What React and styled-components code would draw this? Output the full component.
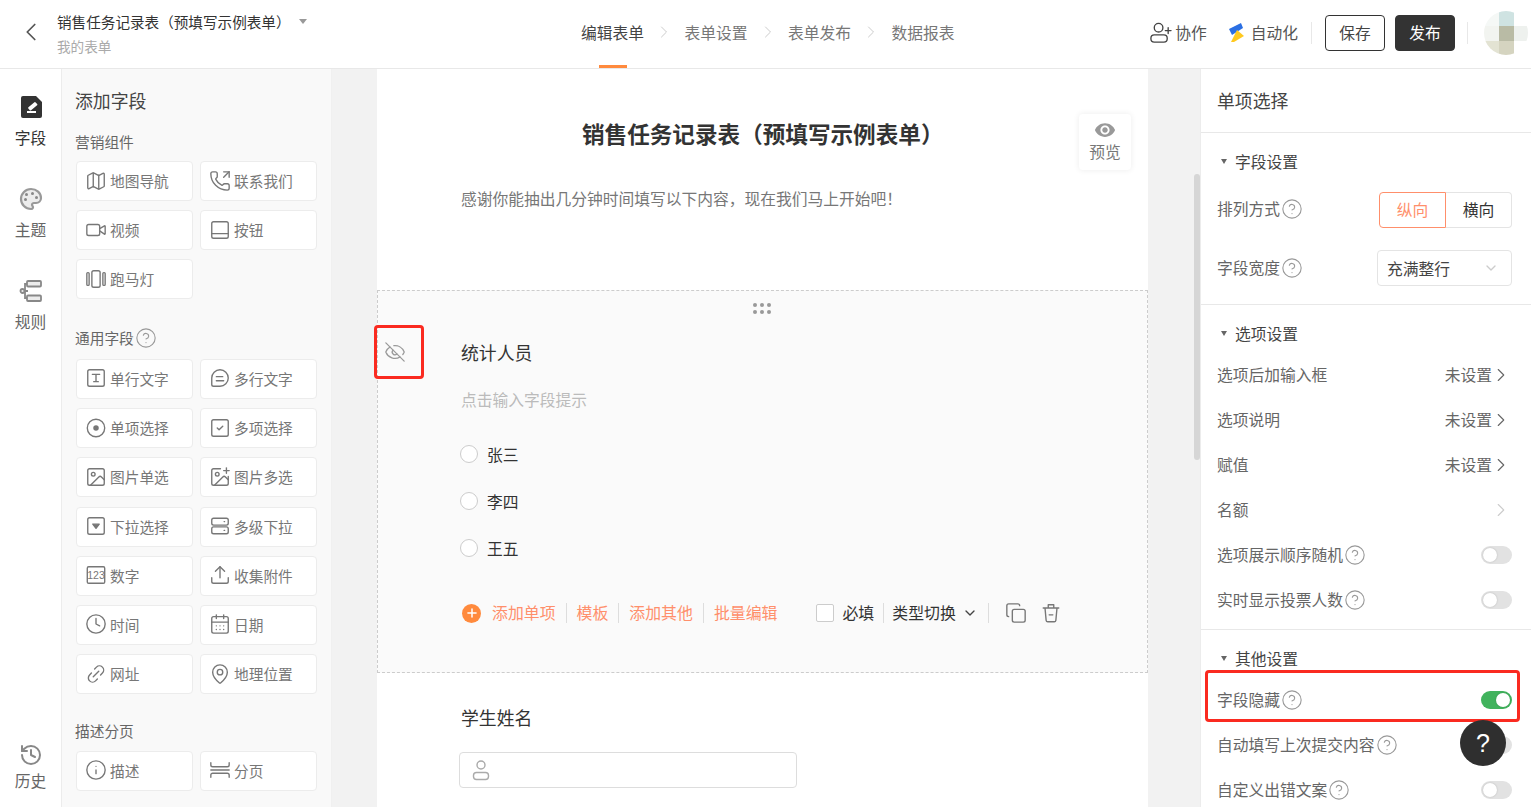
import React from "react";
import styled, { createGlobalStyle } from "styled-components";
import {
  ChevronLeft, ChevronRight, ChevronDown, EyeOff, Plus, Copy,
  Map, PhoneOutgoing, Video, SquareCheck, Image, ImagePlus, Upload, Clock, CalendarDays,
  MapPin, Info, History, HelpCircle,
} from "lucide-react";

const GlobalStyle = createGlobalStyle`
  html, body { margin: 0; padding: 0; background: #fff; }
  body { font-family: "Noto Sans CJK SC", "Noto Sans", "Liberation Sans", sans-serif; color: #333; }
  * { box-sizing: border-box; }
`;

const Page = styled.div`
  width: 1531px;
  height: 807px;
  overflow: hidden;
  position: relative;
  display: flex;
  flex-direction: column;
`;

/* top bar */
const Header = styled.header`
  height: 69px;
  flex: none;
  display: flex;
  align-items: center;
  border-bottom: 1px solid #e8e8e8;
  background: #fff;
`;
const BackZone = styled.div`
  width: 57px;
  display: flex;
  justify-content: center;
  padding: 0 0 4px 4px;
  color: #555;
`;
const TitleBlock = styled.div`
  width: 524px;
  display: flex;
  flex-direction: column;
  gap: 6px;
  margin-top: -1px;
`;
const TitleLine = styled.div`
  display: flex;
  align-items: flex-start;
  font-size: 14.6px;
  line-height: 18px;
  color: #333;
`;
const Caret = styled.span`
  width: 0;
  height: 0;
  margin: 6px 0 0 8px;
  border-left: 4px solid transparent;
  border-right: 4px solid transparent;
  border-top: 5px solid #999;
`;
const SubTitle = styled.div`
  font-size: 13.6px;
  line-height: 18px;
  color: #aaa;
`;
const Steps = styled.nav`
  display: flex;
  align-items: center;
  height: 100%;
`;
const Step = styled.span`
  position: relative;
  height: 100%;
  padding-bottom: 4px;
  display: flex;
  align-items: center;
  font-size: 15.75px;
  color: ${(p) => (p.$active ? "#444" : "#777")};
  ${(p) =>
    p.$active &&
    `&::after {
      content: "";
      position: absolute;
      left: 18px;
      bottom: 0;
      width: 28px;
      height: 3px;
      background: #ff8a3d;
    }`}
`;
const StepArrow = styled.span`
  width: 40.5px;
  height: 100%;
  padding-bottom: 4px;
  display: flex;
  align-items: center;
  justify-content: center;
  color: #ccc;
`;
const Actions = styled.div`
  margin-left: auto;
  margin-bottom: 3px;
  display: flex;
  align-items: center;
`;
const ActionLink = styled.span`
  display: flex;
  align-items: center;
  gap: ${(p) => p.$gap || 3}px;
  font-size: 15.75px;
  color: #555;
  margin-right: ${(p) => p.$mr || 0}px;
`;
const HeadDivider = styled.span`
  width: 1px;
  height: 22px;
  background: #e8e8e8;
  margin: ${(p) => p.$m};
`;
const HeadButton = styled.button`
  width: 60px;
  height: 36px;
  border-radius: 4px;
  font: inherit;
  font-size: 15.75px;
  padding: 0;
  border: 1px solid #333;
  background: ${(p) => (p.$dark ? "#333" : "#fff")};
  color: ${(p) => (p.$dark ? "#fff" : "#444")};
  margin-right: ${(p) => p.$mr || 0}px;
`;
const Avatar = styled.div`
  width: 44px;
  height: 44px;
  margin-right: 3px;
  border-radius: 50%;
  overflow: hidden;
  display: grid;
  grid-template-columns: 15px 15px 14px;
  grid-template-rows: 15px 15px 14px;
`;
const AvatarCell = styled.span`
  background: ${(p) => p.$c};
`;

const Body = styled.div`
  flex: 1;
  display: flex;
  min-height: 0;
`;

/* left rail */
const Rail = styled.aside`
  width: 62px;
  flex: none;
  border-right: 1px solid #ececec;
  padding: 26px 0 15px;
  display: flex;
  flex-direction: column;
  align-items: center;
  gap: 38px;
`;
const RailItem = styled.div`
  display: flex;
  flex-direction: column;
  align-items: center;
  gap: ${(p) => (p.$bottom ? 3 : 8)}px;
  font-size: 15.75px;
  line-height: 22px;
  color: ${(p) => (p.$active ? "#333" : "#666")};
  margin-top: ${(p) => (p.$bottom ? "auto" : 0)};
  svg { display: block; }
`;

/* field palette */
const FieldPalette = styled.aside`
  width: 270px;
  flex: none;
  background: #f9f9f9;
  border-right: 1px solid #f0f0f0;
  padding: 19px 0 0 14px;
`;
const PaletteTitle = styled.h2`
  margin: 0 0 19px -1px;
  font-size: 17.85px;
  font-weight: 400;
  line-height: 24px;
  color: #444;
`;
const GroupLabel = styled.div`
  display: flex;
  align-items: center;
  gap: 1px;
  margin: 0 0 ${(p) => p.$mb || 8}px -1px;
  font-size: 14.7px;
  line-height: 22px;
  color: #666;
`;
const FieldGrid = styled.div`
  display: grid;
  grid-template-columns: 117px 117px;
  column-gap: 7px;
  row-gap: 9.2px;
  margin-bottom: ${(p) => p.$mb || 0}px;
`;
const FieldButton = styled.div`
  height: 40px;
  border: 1px solid #ececec;
  border-radius: 4px;
  background: #fff;
  display: flex;
  align-items: center;
  gap: 3px;
  padding: 0 0 1px 8px;
  font-size: 14.7px;
  color: #777;
  svg { flex: none; }
`;

/* canvas */
const Canvas = styled.main`
  flex: 1;
  min-width: 0;
  position: relative;
  background: #f2f2f2;
  padding: 0 52px 0 45px;
  overflow: hidden;
`;
const ScrollThumb = styled.div`
  position: absolute;
  right: 0;
  top: 105px;
  width: 6px;
  height: 286px;
  border-radius: 3px;
  background: #d6d6d6;
`;
const FormSheet = styled.div`
  background: #fff;
  min-height: 100%;
`;
const FormIntro = styled.section`
  position: relative;
  height: 221px;
  padding: 49px 0 0 84px;
`;
const FormTitle = styled.h1`
  margin: 0 0 0 121px;
  font-size: 22.6px;
  line-height: 32px;
  font-weight: 700;
  color: #333;
  white-space: nowrap;
`;
const FormDesc = styled.p`
  margin: 37px 0 0;
  font-size: 15.75px;
  line-height: 24px;
  color: #777;
  white-space: nowrap;
`;
const PreviewCard = styled.div`
  position: absolute;
  left: 702px;
  top: 45px;
  width: 52px;
  height: 56px;
  border-radius: 4px;
  background: #fff;
  box-shadow: 0 0 6px rgba(0, 0, 0, 0.08);
  display: flex;
  flex-direction: column;
  align-items: center;
  padding-top: 5px;
  font-size: 15.75px;
  line-height: 22px;
  color: #777;
  svg { display: block; }
`;
const ActiveField = styled.section`
  position: relative;
  height: 383px;
  border: 1px dashed #ccc;
  background: #fafafa;
  padding: 48px 0 0 83px;
`;
const DragDots = styled.div`
  position: absolute;
  top: 12px;
  left: 375px;
  display: grid;
  grid-template-columns: repeat(3, 4px);
  gap: 3px;
`;
const Dot = styled.i`
  width: 4px;
  height: 4px;
  border-radius: 50%;
  background: #999;
`;
const HiddenMark = styled.div`
  position: absolute;
  left: 6px;
  top: 50px;
  color: #999;
  svg { display: block; }
`;
const RedBox = styled.div`
  position: absolute;
  left: ${(p) => p.$l}px;
  top: ${(p) => p.$t}px;
  width: ${(p) => p.$w}px;
  height: ${(p) => p.$h}px;
  border: 3px solid #fa2a20;
  border-radius: 4px;
  pointer-events: none;
`;
const FieldLabel = styled.div`
  font-size: 17.85px;
  line-height: 26px;
  color: #333;
`;
const FieldHint = styled.div`
  margin-top: 23px;
  font-size: 15.75px;
  line-height: 24px;
  color: #bbb;
`;
const OptionList = styled.div`
  margin: 30px 0 0 -1px;
  display: flex;
  flex-direction: column;
  gap: 23px;
`;
const OptionRow = styled.label`
  height: 24px;
  display: flex;
  align-items: center;
  gap: 9px;
  font-size: 15.75px;
  color: #333;
`;
const RadioDot = styled.span`
  width: 18px;
  height: 18px;
  border: 1px solid #ccc;
  border-radius: 50%;
  background: #fff;
`;
const ActionRow = styled.div`
  margin-top: 41px;
  height: 24px;
  display: flex;
  align-items: center;
  font-size: 15.9px;
`;
const PlusBadge = styled.span`
  width: 19px;
  height: 19px;
  margin: 0 1px 0 1px;
  border-radius: 50%;
  background: #ff8a3d;
  color: #fff;
  display: flex;
  align-items: center;
  justify-content: center;
`;
const OrangeLink = styled.span`
  padding: 0 10px;
  line-height: 20px;
  color: #ff8f6b;
  border-right: 1px solid ${(p) => (p.$last ? "transparent" : "#ddd")};
`;
const CheckSquare = styled.span`
  width: 18px;
  height: 18px;
  margin: 0 8px 0 28px;
  background: #fff;
  border: 1px solid #ccc;
  border-radius: 2px;
`;
const PlainText = styled.span`
  color: #333;
  line-height: 20px;
`;
const ThinSep = styled.span`
  width: 1px;
  height: 20px;
  background: #ddd;
  margin: ${(p) => p.$m};
`;
const ToolIcon = styled.span`
  display: flex;
  color: #777;
  margin: ${(p) => p.$m};
`;
const PlainField = styled.section`
  padding: 31px 0 0 84px;
`;
const TextBox = styled.div`
  margin: 22px 0 0 -2px;
  width: 338px;
  height: 36px;
  border: 1px solid #ddd;
  border-radius: 4px;
  background: #fff;
  display: flex;
  align-items: center;
  padding-left: 9px;
`;

/* right settings */
const Settings = styled.aside`
  width: 331px;
  flex: none;
  border-left: 1px solid #ececec;
  background: #fff;
`;
const SettingsHead = styled.div`
  height: 64px;
  padding: 0 0 1px 16px;
  display: flex;
  align-items: center;
  font-size: 17.85px;
  color: #444;
  border-bottom: 1px solid #e8e8e8;
`;
const SettingsGroup = styled.section`
  padding: 13px 0 7px;
  border-bottom: ${(p) => (p.$open ? "none" : "1px solid #e8e8e8")};
`;
const GroupHead = styled.div`
  height: 30px;
  margin-bottom: ${(p) => p.$mb || 4}px;
  padding-left: 20px;
  display: flex;
  align-items: center;
  gap: 8px;
  font-size: 15.75px;
  color: #444;
`;
const SmallCaret = styled.span`
  width: 0;
  height: 0;
  border-left: 3px solid transparent;
  border-right: 3px solid transparent;
  border-top: 5px solid #666;
`;
const SettingRow = styled.div`
  position: relative;
  height: ${(p) => (p.$tall ? 58 : 45)}px;
  padding: 0 19px 0 16px;
  display: flex;
  align-items: center;
  justify-content: space-between;
  font-size: 15.75px;
  color: #666;
`;
const RowLabel = styled.span`
  display: flex;
  align-items: center;
  gap: 1px;
  margin-bottom: ${(p) => p.$up || 0}px;
`;
const RowValue = styled.span`
  display: flex;
  align-items: center;
  color: #666;
  svg { margin-left: -2px; }
`;
const Segment = styled.div`
  display: flex;
  width: 133px;
  height: 36px;
`;
const SegmentItem = styled.span`
  flex: 1;
  display: flex;
  align-items: center;
  justify-content: center;
  padding-bottom: 1px;
  border: 1px solid ${(p) => (p.$on ? "#ff8f6b" : "#e4e4e4")};
  border-left-width: ${(p) => (p.$on ? 1 : 0)}px;
  border-radius: ${(p) => (p.$on ? "4px 0 0 4px" : "0 4px 4px 0")};
  color: ${(p) => (p.$on ? "#ff8f6b" : "#333")};
`;
const SelectBox = styled.div`
  width: 135px;
  height: 36px;
  border: 1px solid #e4e4e4;
  border-radius: 4px;
  padding: 0 12px 0 9px;
  display: flex;
  align-items: center;
  justify-content: space-between;
  color: #444;
`;
const Toggle = styled.span`
  position: relative;
  width: 31px;
  height: 18px;
  border-radius: 9px;
  background: ${(p) => (p.$on ? "#41b35d" : "#e2e2e2")};
  &::after {
    content: "";
    position: absolute;
    top: 2px;
    left: ${(p) => (p.$on ? 15 : 2)}px;
    width: 14px;
    height: 14px;
    border-radius: 50%;
    background: #fff;
    box-shadow: 0 0 2px rgba(0, 0, 0, 0.2);
  }
`;
const HelpFab = styled.div`
  position: absolute;
  right: 25px;
  bottom: 41px;
  width: 46px;
  height: 46px;
  border-radius: 50%;
  background: #2f2f2f;
  color: #fff;
  display: flex;
  align-items: center;
  justify-content: center;
  font-size: 25px;
  font-family: "Liberation Sans", sans-serif;
`;

const Glyph = ({ size = 22, color = "#777", sw = 1.5, children }) => (
  <svg width={size} height={size} viewBox="0 0 24 24" fill="none" stroke={color} strokeWidth={sw} strokeLinecap="round" strokeLinejoin="round">
    {children}
  </svg>
);

const FormIcon = () => (
  <svg width="24" height="24" viewBox="-2 0 24 24">
    <path d="M2 1h13l6 6v14a2 2 0 0 1-2 2H2a2 2 0 0 1-2-2V3a2 2 0 0 1 2-2z" fill="#333" />
    <path d="M6 17h9M8 13l6-5 1.5 1.6-6 5z" stroke="#fff" strokeWidth="1.8" fill="#fff" strokeLinejoin="round" />
  </svg>
);
const ThemeIcon = () => (
  <svg width="24" height="24" viewBox="0 0 24 24" fill="#ececec" stroke="#999" strokeWidth="2.2">
    <path d="M12 22a1 1 0 0 1 0-20 10 9 0 0 1 10 9 5 5 0 0 1-5 5h-2.25a1.75 1.75 0 0 0-1.4 2.8l.3.4a1.75 1.75 0 0 1-1.4 2.8z" />
    <g fill="#888" stroke="none">
      <circle cx="13.5" cy="6.5" r="1.5" />
      <circle cx="17.5" cy="10.5" r="1.5" />
      <circle cx="7.5" cy="7.5" r="1.5" />
      <circle cx="6.5" cy="12.5" r="1.5" />
    </g>
  </svg>
);
const RulesIcon = () => (
  <svg width="24" height="24" viewBox="-1 0 24 24" fill="#ececec" stroke="#888" strokeWidth="1.8">
    <rect x="7" y="2" width="14" height="5.5" rx="1" />
    <rect x="7" y="16.5" width="14" height="5.5" rx="1" />
    <circle cx="2.5" cy="12" r="2" />
    <path d="M7 5H5v14h2M4.5 12H8" fill="none" />
  </svg>
);
const BoltLogo = () => (
  <svg width="17" height="21" viewBox="0 0 17 21">
    <path d="M1 7 13 1l2 5L4 13z" fill="#2b6fe3" />
    <path d="M3 20 9 8l7 6-10 6z" fill="#ffc91f" />
  </svg>
);
const UserAdd = () => (
  <Glyph size={23} color="#444" sw={1.4}>
    <circle cx="10" cy="7" r="4.5" />
    <rect x="2" y="14.5" width="17" height="7.5" rx="3.5" />
    <path d="M20 7v6M17 10h6" />
  </Glyph>
);
const PersonIcon = () => (
  <Glyph size={24} color="#aaa" sw={1.4}>
    <circle cx="12" cy="7" r="4" />
    <rect x="4.5" y="14.5" width="15" height="7" rx="3" />
  </Glyph>
);
const BinIcon = () => (
  <Glyph size={22} sw={1.5}>
    <path d="M3.5 6.5h17M9 6V3h6v3M5.5 7l1.2 13a1.8 1.8 0 0 0 1.8 1.6h7a1.8 1.8 0 0 0 1.8-1.6L18.5 7M10 14h4" />
  </Glyph>
);
const SolidEye = () => (
  <svg width="22" height="22" viewBox="0 0 24 24" fill="#999">
    <path d="M12 4.5C7 4.5 2.73 7.61 1 12c1.73 4.39 6 7.5 11 7.5s9.27-3.11 11-7.5c-1.73-4.39-6-7.5-11-7.5zM12 17c-2.76 0-5-2.24-5-5s2.24-5 5-5 5 2.24 5 5-2.24 5-5 5zm0-8c-1.66 0-3 1.34-3 3s1.34 3 3 3 3-1.34 3-3-1.34-3-3-3z" />
  </svg>
);

const lucideProps = { size: 22, color: "#777", strokeWidth: 1.5 };
const icons = {
  map: <Map {...lucideProps} />,
  phone: <PhoneOutgoing {...lucideProps} />,
  video: <Video {...lucideProps} />,
  button: <Glyph><rect x="3" y="3" width="18" height="18" rx="2" /><path d="M3 16h18" /></Glyph>,
  marquee: <Glyph><rect x="7.5" y="3" width="9" height="18" rx="2" /><rect x="2" y="5" width="2.5" height="14" rx="1" /><rect x="19.5" y="5" width="2.5" height="14" rx="1" /></Glyph>,
  text: <Glyph><rect x="3" y="3" width="18" height="18" rx="2" /><path d="M8 8h8M12 8v8M9.5 16h5" /></Glyph>,
  multi: <Glyph><path d="M12 3a9 9 0 1 1 0 18H5a2 2 0 0 1-2-2v-7a9 9 0 0 1 9-9z" /><path d="M8 10.5h7M8 15h8" /></Glyph>,
  radio: <Glyph><circle cx="12" cy="12" r="9.5" /><circle cx="12" cy="12" r="3" fill="#777" stroke="none" /></Glyph>,
  check: <SquareCheck {...lucideProps} />,
  image: <Image {...lucideProps} />,
  images: <ImagePlus {...lucideProps} />,
  select: <Glyph><rect x="3" y="3" width="18" height="18" rx="2" /><path d="M8.5 10h7L12 14.5z" fill="#777" /></Glyph>,
  cascade: <Glyph><rect x="3" y="3.5" width="18" height="7.5" rx="2" /><rect x="3" y="13" width="18" height="7.5" rx="2" /><path d="M16.5 7.2h.5M16.5 16.8h.5" /></Glyph>,
  number: (
    <Glyph>
      <rect x="2.5" y="3" width="19" height="18" rx="1.5" />
      <text x="12" y="16.5" textAnchor="middle" fontSize="11.5" fill="#777" stroke="none" fontFamily="Liberation Sans, sans-serif">123</text>
    </Glyph>
  ),
  upload: <Upload {...lucideProps} />,
  clock: <Clock {...lucideProps} />,
  date: <CalendarDays {...lucideProps} />,
  link: <Glyph><path d="M9 15l6-6M10.5 6.5l2-2a4.5 4.5 0 0 1 6.5 6.5l-2 2M13.5 17.5l-2 2A4.5 4.5 0 0 1 5 13l2-2" /></Glyph>,
  pin: <MapPin {...lucideProps} />,
  info: <Info {...lucideProps} />,
  page: <Glyph><path d="M2 4v2.5a2 2 0 0 0 2 2h16a2 2 0 0 0 2-2V4M2 20v-2.5a2 2 0 0 1 2-2h16a2 2 0 0 1 2 2V20M2 12h20" /></Glyph>,
};

const marketing = [["map", "地图导航"], ["phone", "联系我们"], ["video", "视频"], ["button", "按钮"], ["marquee", "跑马灯"]];
const general = [
  ["text", "单行文字"], ["multi", "多行文字"], ["radio", "单项选择"], ["check", "多项选择"],
  ["image", "图片单选"], ["images", "图片多选"], ["select", "下拉选择"], ["cascade", "多级下拉"],
  ["number", "数字"], ["upload", "收集附件"], ["clock", "时间"], ["date", "日期"],
  ["link", "网址"], ["pin", "地理位置"],
];
const layoutFields = [["info", "描述"], ["page", "分页"]];

const avatarColors = ["#f5f8f6", "#cfe3e2", "#ffffff", "#f2f4f0", "#b9bba5", "#eef1ee", "#e3e3d3", "#d5d4c0", "#ffffff"];

const Help = () => <HelpCircle size={22} color="#999" strokeWidth={1.2} />;
const More = ({ color = "#666" }) => <ChevronRight size={22} color={color} strokeWidth={1.2} />;

const FieldGroup = ({ items, mb }) => (
  <FieldGrid $mb={mb}>
    {items.map(([icon, label]) => (
      <FieldButton key={label}>
        {icons[icon]}
        {label}
      </FieldButton>
    ))}
  </FieldGrid>
);

export default function App() {
  return (
    <Page>
      <GlobalStyle />
      <Header>
        <BackZone>
          <ChevronLeft size={30} strokeWidth={1.4} />
        </BackZone>
        <TitleBlock>
          <TitleLine>
            销售任务记录表（预填写示例表单）
            <Caret />
          </TitleLine>
          <SubTitle>我的表单</SubTitle>
        </TitleBlock>
        <Steps>
          <Step $active>编辑表单</Step>
          <StepArrow><ChevronRight size={20} strokeWidth={1.2} /></StepArrow>
          <Step>表单设置</Step>
          <StepArrow><ChevronRight size={20} strokeWidth={1.2} /></StepArrow>
          <Step>表单发布</Step>
          <StepArrow><ChevronRight size={20} strokeWidth={1.2} /></StepArrow>
          <Step>数据报表</Step>
        </Steps>
        <Actions>
          <ActionLink $mr={21}>
            <UserAdd />
            协作
          </ActionLink>
          <ActionLink $gap={6}>
            <BoltLogo />
            自动化
          </ActionLink>
          <HeadDivider $m="0 13px" />
          <HeadButton $mr={10}>保存</HeadButton>
          <HeadButton $dark>发布</HeadButton>
          <HeadDivider $m="0 16px 0 12px" />
          <Avatar>
            {avatarColors.map((c, i) => (
              <AvatarCell key={i} $c={c} />
            ))}
          </Avatar>
        </Actions>
      </Header>
      <Body>
        <Rail>
          <RailItem $active>
            <FormIcon />
            字段
          </RailItem>
          <RailItem>
            <ThemeIcon />
            主题
          </RailItem>
          <RailItem>
            <RulesIcon />
            规则
          </RailItem>
          <RailItem $bottom>
            <History size={24} color="#888" strokeWidth={2} />
            历史
          </RailItem>
        </Rail>
        <FieldPalette>
          <PaletteTitle>添加字段</PaletteTitle>
          <GroupLabel>营销组件</GroupLabel>
          <FieldGroup items={marketing} mb={27.6} />
          <GroupLabel $mb={10}>
            通用字段
            <Help />
          </GroupLabel>
          <FieldGroup items={general} mb={25.8} />
          <GroupLabel $mb={9}>描述分页</GroupLabel>
          <FieldGroup items={layoutFields} />
        </FieldPalette>
        <Canvas>
          <FormSheet>
            <FormIntro>
              <FormTitle>销售任务记录表（预填写示例表单）</FormTitle>
              <FormDesc>感谢你能抽出几分钟时间填写以下内容，现在我们马上开始吧！</FormDesc>
              <PreviewCard>
                <SolidEye />
                预览
              </PreviewCard>
            </FormIntro>
            <ActiveField>
              <DragDots>
                {[0, 1, 2, 3, 4, 5].map((i) => (
                  <Dot key={i} />
                ))}
              </DragDots>
              <HiddenMark>
                <EyeOff size={22} strokeWidth={1.4} />
              </HiddenMark>
              <RedBox $l={-4} $t={34} $w={50} $h={54} />
              <FieldLabel>统计人员</FieldLabel>
              <FieldHint>点击输入字段提示</FieldHint>
              <OptionList>
                {["张三", "李四", "王五"].map((name) => (
                  <OptionRow key={name}>
                    <RadioDot />
                    {name}
                  </OptionRow>
                ))}
              </OptionList>
              <ActionRow>
                <PlusBadge>
                  <Plus size={14} strokeWidth={2.6} />
                </PlusBadge>
                <OrangeLink>添加单项</OrangeLink>
                <OrangeLink>模板</OrangeLink>
                <OrangeLink>添加其他</OrangeLink>
                <OrangeLink $last>批量编辑</OrangeLink>
                <CheckSquare />
                <PlainText>必填</PlainText>
                <ThinSep $m="0 8px 0 9px" />
                <PlainText>类型切换</PlainText>
                <ToolIcon $m="0 10px 0 6px">
                  <ChevronDown size={16} color="#444" />
                </ToolIcon>
                <ThinSep $m="0 16px 0 0" />
                <ToolIcon $m="0 13px 0 0">
                  <Copy size={22} strokeWidth={1.5} />
                </ToolIcon>
                <ToolIcon>
                  <BinIcon />
                </ToolIcon>
              </ActionRow>
            </ActiveField>
            <PlainField>
              <FieldLabel>学生姓名</FieldLabel>
              <TextBox>
                <PersonIcon />
              </TextBox>
            </PlainField>
          </FormSheet>
          <ScrollThumb />
        </Canvas>
        <Settings>
          <SettingsHead>单项选择</SettingsHead>
          <SettingsGroup>
            <GroupHead $mb={5}><SmallCaret />字段设置</GroupHead>
            <SettingRow $tall>
              <RowLabel $up={3}>排列方式<Help /></RowLabel>
              <Segment>
                <SegmentItem $on>纵向</SegmentItem>
                <SegmentItem>横向</SegmentItem>
              </Segment>
            </SettingRow>
            <SettingRow $tall>
              <RowLabel $up={1}>字段宽度<Help /></RowLabel>
              <SelectBox>
                充满整行
                <ChevronDown size={16} color="#ccc" />
              </SelectBox>
            </SettingRow>
          </SettingsGroup>
          <SettingsGroup>
            <GroupHead><SmallCaret />选项设置</GroupHead>
            <SettingRow>
              选项后加输入框
              <RowValue>未设置<More /></RowValue>
            </SettingRow>
            <SettingRow>
              选项说明
              <RowValue>未设置<More /></RowValue>
            </SettingRow>
            <SettingRow>
              赋值
              <RowValue>未设置<More /></RowValue>
            </SettingRow>
            <SettingRow>
              名额
              <RowValue><More color="#ccc" /></RowValue>
            </SettingRow>
            <SettingRow>
              <RowLabel>选项展示顺序随机<Help /></RowLabel>
              <Toggle />
            </SettingRow>
            <SettingRow>
              <RowLabel>实时显示投票人数<Help /></RowLabel>
              <Toggle />
            </SettingRow>
          </SettingsGroup>
          <SettingsGroup $open>
            <GroupHead><SmallCaret />其他设置</GroupHead>
            <SettingRow>
              <RowLabel>字段隐藏<Help /></RowLabel>
              <Toggle $on />
              <RedBox $l={4} $t={-7} $w={315} $h={52} />
            </SettingRow>
            <SettingRow>
              <RowLabel>自动填写上次提交内容<Help /></RowLabel>
              <Toggle />
            </SettingRow>
            <SettingRow>
              <RowLabel>自定义出错文案<Help /></RowLabel>
              <Toggle />
            </SettingRow>
          </SettingsGroup>
        </Settings>
      </Body>
      <HelpFab>?</HelpFab>
    </Page>
  );
}
